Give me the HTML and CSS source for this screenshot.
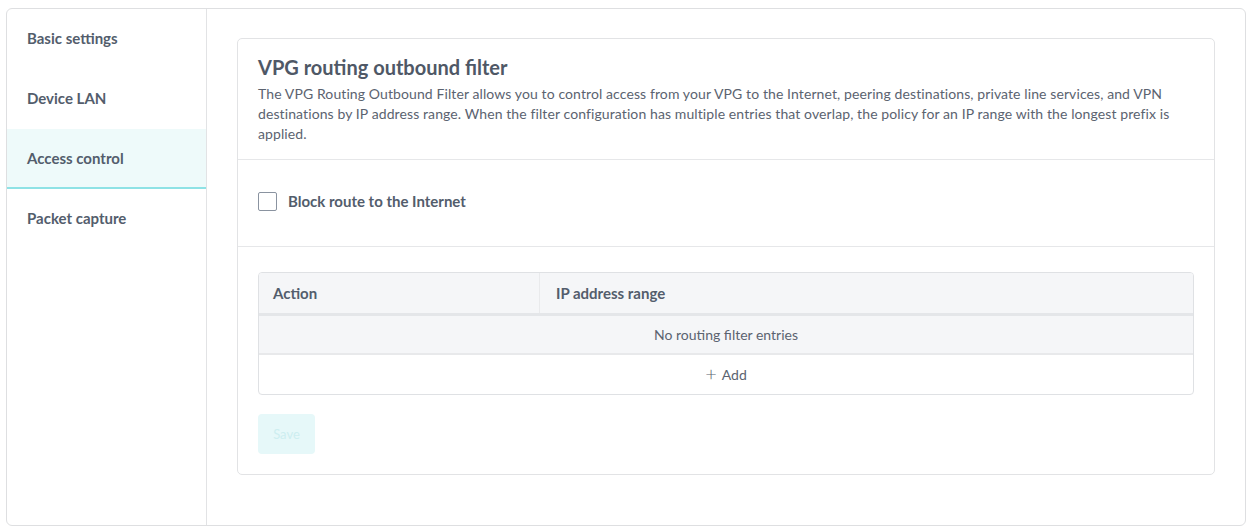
FILE: index.html
```html
<!DOCTYPE html>
<html lang="en">
<head>
    <meta charset="UTF-8">
    <title>VPG routing outbound filter</title>
    <link rel="stylesheet" href="styles.css">
</head>
<body>
    <div class="marco">
        <!-- Menú lateral -->
        <nav class="lateral">
            <a class="item">Basic settings</a>
            <a class="item">Device LAN</a>
            <a class="item activo">Access control</a>
            <a class="item">Packet capture</a>
        </nav>
        <main class="contenido">
            <div class="tarjeta">
                <div class="seccion cabecera">
                    <h2>VPG routing outbound filter</h2>
                    <p>The VPG Routing Outbound Filter allows you to control access from your VPG to the Internet, peering destinations, private line services, and VPN destinations by IP address range. When the filter configuration has multiple entries that overlap, the policy for an IP range with the longest prefix is applied.</p>
                </div>
                <div class="seccion bloqueo">
                    <label class="check">
                        <span class="caja"></span>
                        Block route to the Internet
                    </label>
                </div>
                <div class="seccion tabla-wrap">
                    <div class="tabla">
                        <div class="fila encabezado">
                            <div class="col-accion">Action</div>
                            <div class="col-rango">IP address range</div>
                        </div>
                        <div class="fila vacia">No routing filter entries</div>
                        <div class="fila agregar"><span class="mas">+</span> Add</div>
                    </div>
                    <button class="guardar" disabled>Save</button>
                </div>
            </div>
        </main>
    </div>
</body>
</html>
```

FILE: styles.css
```css
body {
    margin: 0;
    padding: 8px 8px 6px 6px;
    font-family: Lato, "Noto Sans", sans-serif;
    background-color: #ffffff;
    color: #515a68;
}
.marco {
    display: flex;
    height: 518px;
    border: 1px solid #dedfe1;
    border-radius: 6px;
    box-sizing: border-box;
}
.lateral {
    width: 199px;
    flex-shrink: 0;
    border-right: 1px solid #e2e3e5;
    display: flex;
    flex-direction: column;
}
.item {
    display: flex;
    align-items: center;
    height: 60px;
    padding-left: 20px;
    padding-bottom: 2px;
    font-size: 15px;
    font-weight: bold;
    color: #535d6c;
    box-sizing: border-box;
}
.item.activo {
    background-color: #eefafa;
    border-bottom: 2px solid #8ee2e5;
    padding-bottom: 0;
}
.contenido {
    flex: 1;
    padding: 29px 30px 0 30px;
}
.tarjeta {
    border: 1px solid #e2e3e5;
    border-radius: 5px;
    height: 437px;
    box-sizing: border-box;
}
.seccion {
    padding: 0 20px;
    border-bottom: 1px solid #e6e7e9;
}
.seccion:last-child {
    border-bottom: none;
}
.cabecera {
    padding-top: 16px;
    padding-bottom: 15px;
}
.cabecera h2 {
    margin: 0 0 5px 0;
    font-size: 20px;
    font-weight: bold;
    color: #4f5866;
}
.cabecera p {
    margin: 0;
    font-size: 14px;
    line-height: 20px;
    color: #5b6370;
    letter-spacing: 0.1px;
}
.bloqueo {
    height: 87px;
    display: flex;
    align-items: center;
    padding-bottom: 4px;
    box-sizing: border-box;
}
.check {
    display: flex;
    align-items: center;
    gap: 11px;
    font-size: 15px;
    font-weight: bold;
    color: #535d6c;
}
.caja {
    width: 17px;
    height: 17px;
    border: 1.5px solid #8a93a0;
    border-radius: 2px;
}
.tabla-wrap {
    padding-top: 25px;
}
.tabla {
    border: 1px solid #dfe1e4;
    border-radius: 4px;
    overflow: hidden;
    font-size: 14px;
}
.fila {
    display: flex;
    align-items: center;
}
.encabezado {
    height: 40px;
    background-color: #f5f6f8;
    border-bottom: 3px solid #e4e6e9;
    font-size: 15px;
    font-weight: bold;
    color: #535d6c;
}
.col-accion {
    width: 281px;
    padding-left: 14px;
    padding-bottom: 1px;
    border-right: 1px solid #e9eaec;
    height: 100%;
    display: flex;
    align-items: center;
    box-sizing: border-box;
}
.col-rango {
    padding-left: 16px;
    padding-bottom: 1px;
}
.vacia {
    height: 37px;
    justify-content: center;
    background-color: #f5f6f8;
    border-bottom: 2px solid #e8e9eb;
    color: #5b6370;
}
.agregar {
    height: 39px;
    justify-content: center;
    color: #5b6370;
    gap: 5px;
}
.mas {
    font-size: 20px;
    font-weight: 300;
    margin-top: -3px;
}
.guardar {
    margin: 19px 0 20px 0;
    width: 57px;
    height: 40px;
    border: none;
    border-radius: 4px;
    background-color: #e6f8f9;
    color: #cdeef0;
    font-family: inherit;
    font-size: 13px;
}
```
